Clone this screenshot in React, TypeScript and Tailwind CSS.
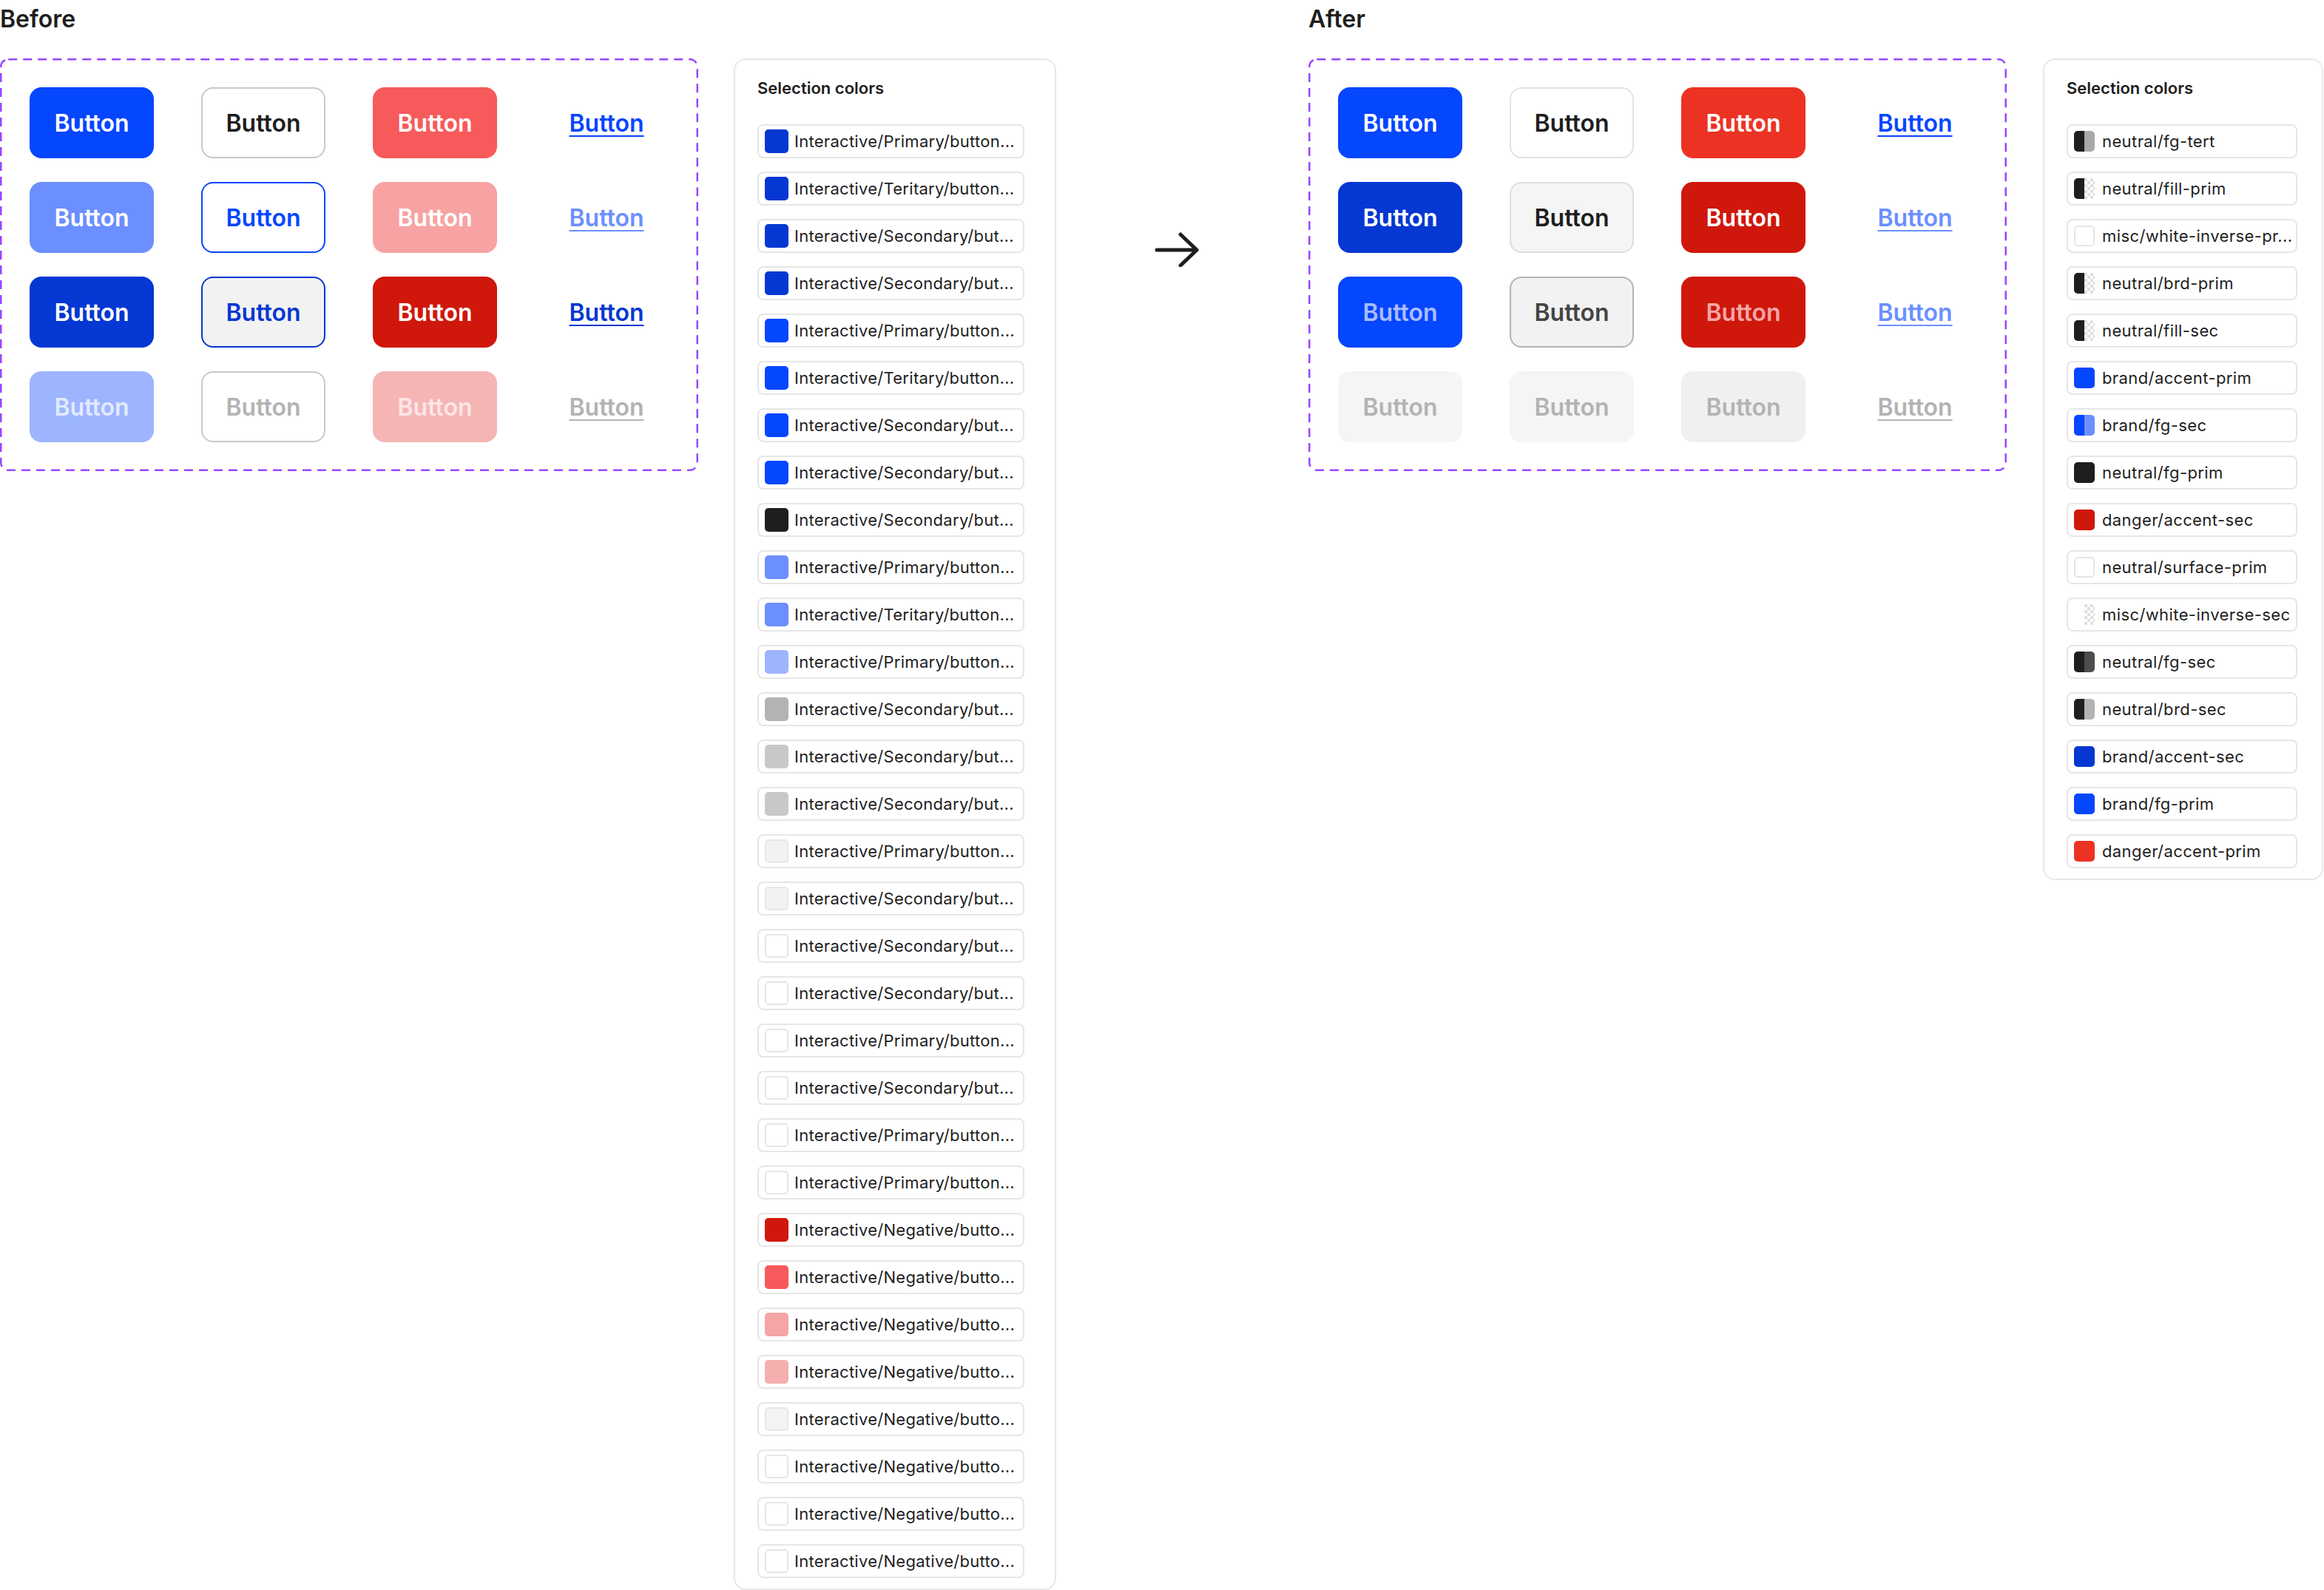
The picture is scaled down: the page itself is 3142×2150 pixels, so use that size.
import React from "react";

type Sw = { l: string; r?: string; border?: boolean; checkR?: boolean; noBorder?: boolean };

const Checker = ({ w, h }: { w: number; h: number }) => (
  <svg width={w} height={h} viewBox={`0 0 ${w} ${h}`} className="block">
    <rect width={w} height={h} fill="#ffffff" />
    {Array.from({ length: Math.ceil(h / 4) }).map((_, yi) =>
      Array.from({ length: Math.ceil(w / 4) }).map((__, xi) =>
        (xi + yi) % 2 === 0 ? (
          <rect key={`${xi}-${yi}`} x={xi * 4} y={yi * 4} width={4} height={4} fill="#dedede" />
        ) : null
      )
    )}
  </svg>
);

const Swatch = ({ s, size }: { s: Sw; size: number }) => {
  const half = size / 2;
  return (
    <div
      className={
        "flex shrink-0 overflow-hidden rounded-[5px] " +
        (s.border ? "border-2 border-[#e6e6e6]" : "")
      }
      style={{ width: size, height: size }}
    >
      {s.r || s.checkR ? (
        <>
          <div style={{ width: half, height: size, background: s.l }} />
          {s.checkR ? (
            <Checker w={half} h={size} />
          ) : (
            <div style={{ width: half, height: size, background: s.r }} />
          )}
        </>
      ) : (
        <div className="h-full w-full" style={{ background: s.l }} />
      )}
    </div>
  );
};

type Row = { label: string; sw: Sw };

const Panel = ({
  rows,
  width,
  rowWidth,
  swSize,
  textGap,
  tracking,
}: {
  rows: Row[];
  width: string;
  rowWidth: string;
  swSize: number;
  textGap: string;
  tracking: string;
}) => (
  <div className={"flex flex-col rounded-2xl border-2 border-[#e8e8e8] bg-white pl-[30px] pt-[25px] pb-[14px] " + width}>
    <div className="text-[22px] font-semibold leading-[26px] text-[#1e1e1e]">Selection colors</div>
    <div className="mt-[36px] flex flex-col gap-[18px]">
      {rows.map((r, i) => (
        <div
          key={i}
          className={"flex h-[46px] items-center rounded-lg border-2 border-[#e6e6e6] pl-[8px] " + rowWidth + " " + textGap}
        >
          <Swatch s={r.sw} size={swSize} />
          <span className={"whitespace-nowrap text-[22px] leading-[26px] text-[#1e1e1e] " + tracking}>{r.label}</span>
        </div>
      ))}
    </div>
  </div>
);

const BASE = "flex h-[96px] w-[168px] items-center justify-center rounded-2xl pt-[2px] text-[32px] font-semibold";
const LINK = "flex h-[96px] w-[168px] items-center justify-center pt-[2px] text-[32px] font-semibold";

type B = { cls: string; link?: boolean };

const Buttons = ({ items }: { items: B[] }) => (
  <div className="relative h-[558px] w-[944px] px-[40px] pt-[39px]">
    <svg className="pointer-events-none absolute inset-0" width="944" height="558">
      <rect
        x="1.25"
        y="1.25"
        width="941.5"
        height="555.5"
        rx="10"
        fill="none"
        stroke="#9747FF"
        strokeWidth="2.5"
        strokeDasharray="12 8"
      />
    </svg>
    <div className="grid grid-cols-[repeat(4,168px)] gap-x-[64px] gap-y-[32px]">
      {items.map((b, i) =>
        b.link ? (
          <div key={i} className={LINK}>
            <span className={"underline decoration-2 underline-offset-[5px] " + b.cls}>Button</span>
          </div>
        ) : (
          <div key={i} className={BASE + " " + b.cls}>
            Button
          </div>
        )
      )}
    </div>
  </div>
);

const beforeButtons: B[] = [
  { cls: "bg-[#0546ff] text-white" },
  { cls: "bg-white border-2 border-[#c8c8c8] text-[#1e1e1e]" },
  { cls: "bg-[#f75a5a] text-white" },
  { cls: "text-[#0546ff]", link: true },
  { cls: "bg-[#6b8fff] text-white" },
  { cls: "bg-white border-2 border-[#0546ff] text-[#0546ff]" },
  { cls: "bg-[#f8a3a3] text-white" },
  { cls: "text-[#6b8fff]", link: true },
  { cls: "bg-[#0537d2] text-white" },
  { cls: "bg-[#f2f2f2] border-2 border-[#0537d2] text-[#0537d2]" },
  { cls: "bg-[#d0170b] text-white" },
  { cls: "text-[#0537d2]", link: true },
  { cls: "bg-[#9db5ff] text-[#e3e9ff]" },
  { cls: "bg-white border-2 border-[#c8c8c8] text-[#b3b3b3]" },
  { cls: "bg-[#f6b5b5] text-[#fde6e6]" },
  { cls: "text-[#b3b3b3]", link: true },
];

const afterButtons: B[] = [
  { cls: "bg-[#0546ff] text-white" },
  { cls: "bg-white border-2 border-[#e3e3e3] text-[#1e1e1e]" },
  { cls: "bg-[#ec3323] text-white" },
  { cls: "text-[#0546ff]", link: true },
  { cls: "bg-[#0537d2] text-white" },
  { cls: "bg-[#f5f5f5] border-2 border-[#dedede] text-[#1e1e1e]" },
  { cls: "bg-[#d0170b] text-white" },
  { cls: "text-[#6b8fff]", link: true },
  { cls: "bg-[#0546ff] text-[#a9bdff]" },
  { cls: "bg-[#f2f2f2] border-2 border-[#b3b3b3] text-[#444444]" },
  { cls: "bg-[#d0170b] text-[#f5a6a6]" },
  { cls: "text-[#6b8fff]", link: true },
  { cls: "bg-[#f5f5f5] text-[#b3b3b3]" },
  { cls: "bg-[#f5f5f5] text-[#b3b3b3]" },
  { cls: "bg-[#f0f0f0] text-[#b3b3b3]" },
  { cls: "text-[#b3b3b3]", link: true },
];

const P = "Interactive/Primary/button...";
const T = "Interactive/Teritary/button...";
const S = "Interactive/Secondary/but...";
const N = "Interactive/Negative/butto...";
const W: Sw = { l: "#ffffff", border: true };

const beforeRows: Row[] = [
  { label: P, sw: { l: "#0537d2" } },
  { label: T, sw: { l: "#0537d2" } },
  { label: S, sw: { l: "#0537d2" } },
  { label: S, sw: { l: "#0537d2" } },
  { label: P, sw: { l: "#0546ff" } },
  { label: T, sw: { l: "#0546ff" } },
  { label: S, sw: { l: "#0546ff" } },
  { label: S, sw: { l: "#0546ff" } },
  { label: S, sw: { l: "#1e1e1e" } },
  { label: P, sw: { l: "#6b8fff" } },
  { label: T, sw: { l: "#6b8fff" } },
  { label: P, sw: { l: "#9db5ff" } },
  { label: S, sw: { l: "#b3b3b3" } },
  { label: S, sw: { l: "#c8c8c8" } },
  { label: S, sw: { l: "#c8c8c8" } },
  { label: P, sw: { l: "#f2f2f2", border: true } },
  { label: S, sw: { l: "#f2f2f2", border: true } },
  { label: S, sw: W },
  { label: S, sw: W },
  { label: P, sw: W },
  { label: S, sw: W },
  { label: P, sw: W },
  { label: P, sw: W },
  { label: N, sw: { l: "#d0170b" } },
  { label: N, sw: { l: "#f75a5a" } },
  { label: N, sw: { l: "#f5a5a5" } },
  { label: N, sw: { l: "#f5afaf" } },
  { label: N, sw: { l: "#f3f3f3", border: true } },
  { label: N, sw: W },
  { label: N, sw: W },
  { label: N, sw: W },
];

const K = "#1e1e1e";
const afterRows: Row[] = [
  { label: "neutral/fg-tert", sw: { l: K, r: "#a8a8a8" } },
  { label: "neutral/fill-prim", sw: { l: K, checkR: true } },
  { label: "misc/white-inverse-pr...", sw: W },
  { label: "neutral/brd-prim", sw: { l: K, checkR: true } },
  { label: "neutral/fill-sec", sw: { l: K, checkR: true } },
  { label: "brand/accent-prim", sw: { l: "#0546ff" } },
  { label: "brand/fg-sec", sw: { l: "#0546ff", r: "#6b8fff" } },
  { label: "neutral/fg-prim", sw: { l: K } },
  { label: "danger/accent-sec", sw: { l: "#d0170b" } },
  { label: "neutral/surface-prim", sw: W },
  { label: "misc/white-inverse-sec", sw: { l: "#ffffff", checkR: true } },
  { label: "neutral/fg-sec", sw: { l: K, r: "#4d4d4d" } },
  { label: "neutral/brd-sec", sw: { l: K, r: "#b3b3b3" } },
  { label: "brand/accent-sec", sw: { l: "#0537d2" } },
  { label: "brand/fg-prim", sw: { l: "#0546ff" } },
  { label: "danger/accent-prim", sw: { l: "#ec3323" } },
];

const Label = ({ children }: { children: React.ReactNode }) => (
  <div className="h-[79px] pt-[6px] text-[32px] font-semibold leading-[40px] text-[#1e1e1e]">{children}</div>
);

export default function App() {
  return (
    <div className="flex h-[2150px] w-[3142px] items-start overflow-hidden bg-white font-[Inter,'Noto_Sans',sans-serif]">
      <div className="flex flex-col">
        <Label>Before</Label>
        <div className="flex items-start gap-[48px]">
          <Buttons items={beforeButtons} />
          <Panel rows={beforeRows} width="w-[436px]" rowWidth="w-[361px]" swSize={32} textGap="gap-[8px]" tracking="tracking-[0.28px]" />
        </div>
      </div>
      <div className="ml-[132px] mt-[313px] w-[62px] shrink-0">
        <svg width="62" height="48" viewBox="0 0 62 48" fill="none">
          <path d="M4 25 H58 M36 4 L58 25 L36 46" stroke="#1e1e1e" strokeWidth="5" strokeLinecap="round" strokeLinejoin="round" />
        </svg>
      </div>
      <div className="ml-[147px] flex flex-col">
        <Label>After</Label>
        <div className="flex items-start gap-[49px]">
          <Buttons items={afterButtons} />
          <Panel rows={afterRows} width="w-[379px]" rowWidth="w-[312px]" swSize={28} textGap="gap-[10px]" tracking="tracking-[0.4px]" />
        </div>
      </div>
    </div>
  );
}
